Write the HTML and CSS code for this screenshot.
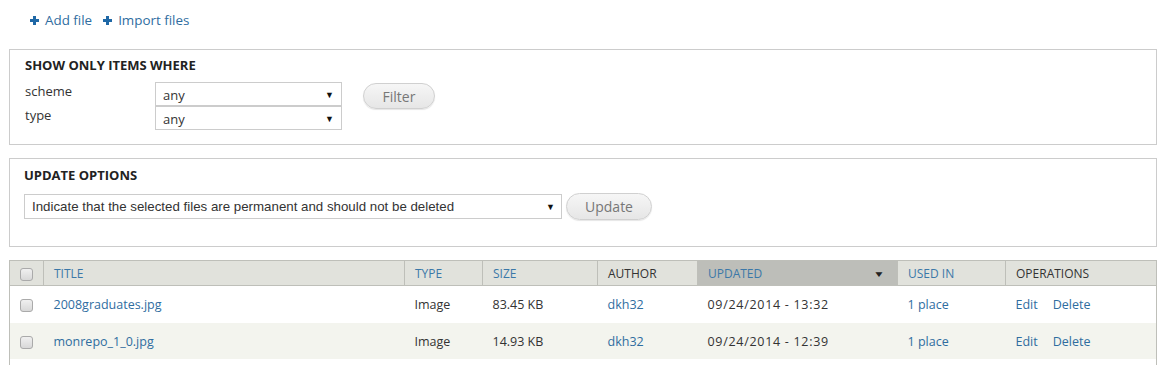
FILE: index.html
```html
<!DOCTYPE html>
<html lang="en">
<head>
    <meta charset="UTF-8">
    <title>Files</title>
    <link rel="stylesheet" href="styles.css">
</head>
<body>

    <ul class="action-links">
        <li>
            <svg class="plus" width="9" height="9" viewBox="0 0 9 9"><path d="M3 0h3v3h3v3H6v3H3V6H0V3h3z" fill="#1f68a6"/></svg>
            <a href="#">Add file</a>
        </li>
        <li>
            <svg class="plus" width="9" height="9" viewBox="0 0 9 9"><path d="M3 0h3v3h3v3H6v3H3V6H0V3h3z" fill="#1f68a6"/></svg>
            <a href="#">Import files</a>
        </li>
    </ul>

    <div class="fieldset filter-box">
        <h3>SHOW ONLY ITEMS WHERE</h3>
        <div class="filter-row">
            <div class="filter-labels">
                <div class="filter-item">
                    <label>scheme</label>
                    <div class="select small"><span>any</span><span class="arrow">&#9660;</span></div>
                </div>
                <div class="filter-item">
                    <label>type</label>
                    <div class="select small"><span>any</span><span class="arrow">&#9660;</span></div>
                </div>
            </div>
            <button class="button filter-button">Filter</button>
        </div>
    </div>

    <div class="fieldset update-box">
        <h3>UPDATE OPTIONS</h3>
        <div class="update-row">
            <div class="select wide"><span>Indicate that the selected files are permanent and should not be deleted</span><span class="arrow">&#9660;</span></div>
            <button class="button update-button">Update</button>
        </div>
    </div>

    <table class="files">
        <thead>
            <tr>
                <th class="col-check"><span class="checkbox"></span></th>
                <th class="col-title"><a href="#">TITLE</a></th>
                <th class="col-type"><a href="#">TYPE</a></th>
                <th class="col-size"><a href="#">SIZE</a></th>
                <th class="col-author">AUTHOR</th>
                <th class="col-updated active"><a href="#">UPDATED</a><span class="sort">&#9660;</span></th>
                <th class="col-used"><a href="#">USED IN</a></th>
                <th class="col-ops">OPERATIONS</th>
            </tr>
        </thead>
        <tbody>
            <tr class="odd">
                <td><span class="checkbox"></span></td>
                <td><a href="#">2008graduates.jpg</a></td>
                <td>Image</td>
                <td>83.45 KB</td>
                <td><a href="#">dkh32</a></td>
                <td class="date">09/24/2014 - 13:32</td>
                <td><a href="#">1 place</a></td>
                <td class="ops"><a href="#">Edit</a><a href="#">Delete</a></td>
            </tr>
            <tr class="even">
                <td><span class="checkbox"></span></td>
                <td><a href="#">monrepo_1_0.jpg</a></td>
                <td>Image</td>
                <td>14.93 KB</td>
                <td><a href="#">dkh32</a></td>
                <td class="date">09/24/2014 - 12:39</td>
                <td><a href="#">1 place</a></td>
                <td class="ops"><a href="#">Edit</a><a href="#">Delete</a></td>
            </tr>
            <tr class="odd spacer">
                <td></td><td></td><td></td><td></td><td></td><td></td><td></td><td></td>
            </tr>
        </tbody>
    </table>

</body>
</html>
```

FILE: styles.css
```css
body {
    margin: 0;
    padding: 0 13px 0 9px;
    background: #fff;
    color: #333;
    font-family: "Open Sans", "Noto Sans", sans-serif;
    font-size: 12px;
}

a {
    color: #2f6d9f;
    text-decoration: none;
}

/* top links */
.action-links {
    list-style: none;
    margin: 0;
    padding: 11px 0 0 21px;
    height: 49px;
    box-sizing: border-box;
    display: flex;
    align-items: flex-start;
    gap: 11px;
    font-size: 13.4px;
    line-height: 18px;
}

.action-links li {
    display: flex;
    align-items: center;
    gap: 6px;
}

.plus {
    display: block;
}

/* fieldsets */
.fieldset {
    border: 1px solid #ccc;
    padding: 8px 15px 0 15px;
    box-sizing: border-box;
}

.fieldset h3 {
    margin: 0;
    font-size: 13px;
    font-weight: bold;
    color: #222;
    line-height: 14px;
}

.filter-box {
    height: 96px;
    margin-bottom: 13px;
}

.filter-row {
    display: flex;
    align-items: flex-start;
    margin-top: 10px;
}

.filter-item {
    display: flex;
    align-items: center;
    height: 24px;
}

.filter-item label {
    width: 130px;
    font-size: 13px;
    position: relative;
    top: -3px;
}

.select {
    display: flex;
    justify-content: space-between;
    align-items: center;
    border: 1px solid #ccc;
    box-sizing: border-box;
    background: #fff;
    font-size: 13px;
    color: #333;
}

.select .arrow {
    font-size: 9px;
    color: #111;
}

.select.small {
    width: 187px;
    height: 24px;
    padding: 1px 7px 0 7px;
}

.button {
    border: 1px solid #d0d0d0;
    border-radius: 20px;
    background: linear-gradient(#f6f6f6, #e6e6e6);
    color: #777;
    font-family: inherit;
    font-size: 14px;
    padding: 0;
    box-shadow: 0 1px 1px rgba(0, 0, 0, 0.1);
}

.filter-button {
    width: 72px;
    height: 26px;
    margin: 1px 0 0 21px;
}

.update-box {
    height: 89px;
    margin-bottom: 13px;
    padding: 9px 15px 0 14px;
}

.update-row {
    display: flex;
    align-items: center;
    margin-top: 11px;
    gap: 4px;
}

.select.wide {
    width: 538px;
    height: 25px;
    padding: 0 6px 0 7px;
    font-family: "Liberation Sans", Arial, sans-serif;
    font-size: 13.3px;
}

.update-button {
    width: 86px;
    height: 27px;
}

/* table */
.files {
    width: 100%;
    border-collapse: collapse;
    border-left: 1px solid #bebfb9;
    border-right: 1px solid #bebfb9;
    font-size: 12.5px;
}

.files th {
    height: 24px;
    background: #e1e2dc;
    border-top: 1px solid #bebfb9;
    border-bottom: 1px solid #bebfb9;
    border-left: 1px solid #bebfb9;
    text-align: left;
    font-weight: normal;
    padding: 0 10px;
    white-space: nowrap;
    font-size: 12px;
}

.files th a {
    color: #3b78a8;
}

.files th.active {
    background: #bdbeb9;
}

.files th .sort {
    float: right;
    font-size: 12px;
    color: #222;
    margin-right: 2px;
    transform: scaleY(0.7);
}

.files td {
    padding: 0 10px;
    height: 37px;
    white-space: nowrap;
}

.files tr.even td {
    background: #f3f4ee;
    height: 36px;
}

.files tr.spacer td {
    height: 6px;
    padding: 0;
}

.files .date {
    letter-spacing: 0.7px;
}

.col-check { width: 13px; }
.col-title { width: 340px; }
.col-type { width: 57px; }
.col-size { width: 94px; }
.col-author { width: 79px; }
.col-updated { width: 179px; }
.col-used { width: 87px; }

.files th.col-check,
.files tr td:first-child {
    padding: 0 10px;
    text-align: center;
}

.checkbox {
    display: inline-block;
    width: 11px;
    height: 11px;
    border: 1px solid #aaa;
    border-radius: 3px;
    background: linear-gradient(#f0f0f0, #d8d8d8);
    vertical-align: middle;
}

.ops a {
    margin-right: 15px;
}
```
